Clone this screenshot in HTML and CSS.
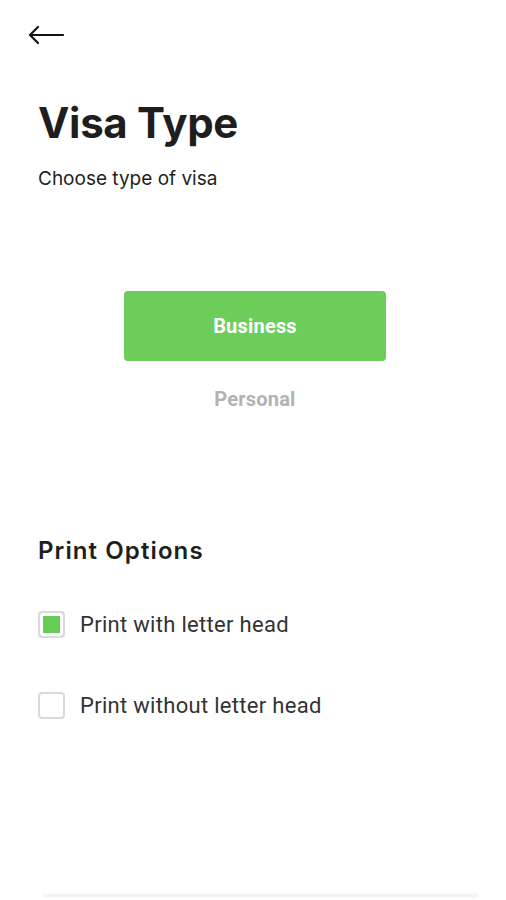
FILE: index.html
```html
<!DOCTYPE html>
<html lang="en">
  <head>
    <meta charset="UTF-8" />
    <title>Visa Type</title>
    <link rel="stylesheet" href="styles.css">
  </head>
  <body>
    <div class="screen">
      <a href="#" class="back">
        <svg width="36" height="20" viewBox="0 0 36 20">
          <path d="M2 10H35M10 2L2 10L10 18" fill="none" stroke="#111" stroke-width="2.2" stroke-linecap="round" stroke-linejoin="round" />
        </svg>
      </a>

      <h1>Visa Type</h1>
      <p class="sub">Choose type of visa</p>

      <div class="types">
        <button class="type active">Business</button>
        <button class="type">Personal</button>
      </div>

      <h2>Print Options</h2>
      <label class="opt">
        <span class="box checked"></span>
        Print with letter head
      </label>
      <label class="opt">
        <span class="box"></span>
        Print without letter head
      </label>

      <div class="bottom"></div>
    </div>
  </body>
</html>
```

FILE: styles.css
```css
body {
  margin: 0;
  background: #fff;
  font-family: Roboto, "Liberation Sans", sans-serif;
  color: #222;
}

.screen {
  height: 900px;
  padding: 0 38px;
  display: flex;
  flex-direction: column;
  position: relative;
  overflow: hidden;
}

.back {
  display: flex;
  margin-top: 25px;
  margin-left: -10px;
  height: 20px;
}

h1 {
  font-family: Inter, sans-serif;
  font-size: 42px;
  font-weight: 700;
  color: #1e1e1e;
  margin: 52px 0 0;
  letter-spacing: -0.3px;
  line-height: 52px;
}

.sub {
  font-family: Inter, sans-serif;
  font-size: 19px;
  margin: 19px 0 0;
  color: #1e1e1e;
  line-height: 22px;
}

.types {
  display: flex;
  flex-direction: column;
  align-items: center;
  margin-top: 101px;
  margin-left: 4px;
}

.type {
  font-family: Roboto, sans-serif;
  font-size: 20px;
  font-weight: 700;
  letter-spacing: 0.2px;
  border: none;
  background: none;
  color: #b3b3b3;
  padding: 0;
}

.type.active {
  width: 262px;
  height: 70px;
  margin-bottom: 26px;
  background: #6dcd5a;
  color: #fff;
  border-radius: 4px;
}

h2 {
  font-family: Inter, sans-serif;
  font-size: 24px;
  font-weight: 600;
  letter-spacing: 1.1px;
  color: #1e1e1e;
  margin: 125px 0 0;
  line-height: 30px;
}

.opt {
  display: flex;
  align-items: center;
  gap: 15px;
  font-size: 22px;
  letter-spacing: 0.3px;
  color: #333;
  height: 28px;
}

.opt:first-of-type {
  margin-top: 44px;
}

.opt + .opt {
  margin-top: 53px;
}

.box {
  width: 23px;
  height: 23px;
  border: 2px solid #dadada;
  border-radius: 4px;
  box-sizing: content-box;
  flex-shrink: 0;
}

.box.checked {
  background: #67cd55;
  box-shadow: inset 0 0 0 3px #fff;
}

.bottom {
  position: absolute;
  left: 43px;
  right: 28px;
  bottom: 3px;
  height: 3px;
  background: #f3f4f1;
  box-shadow: 0 0 4px rgba(0, 0, 0, 0.04);
}
```
